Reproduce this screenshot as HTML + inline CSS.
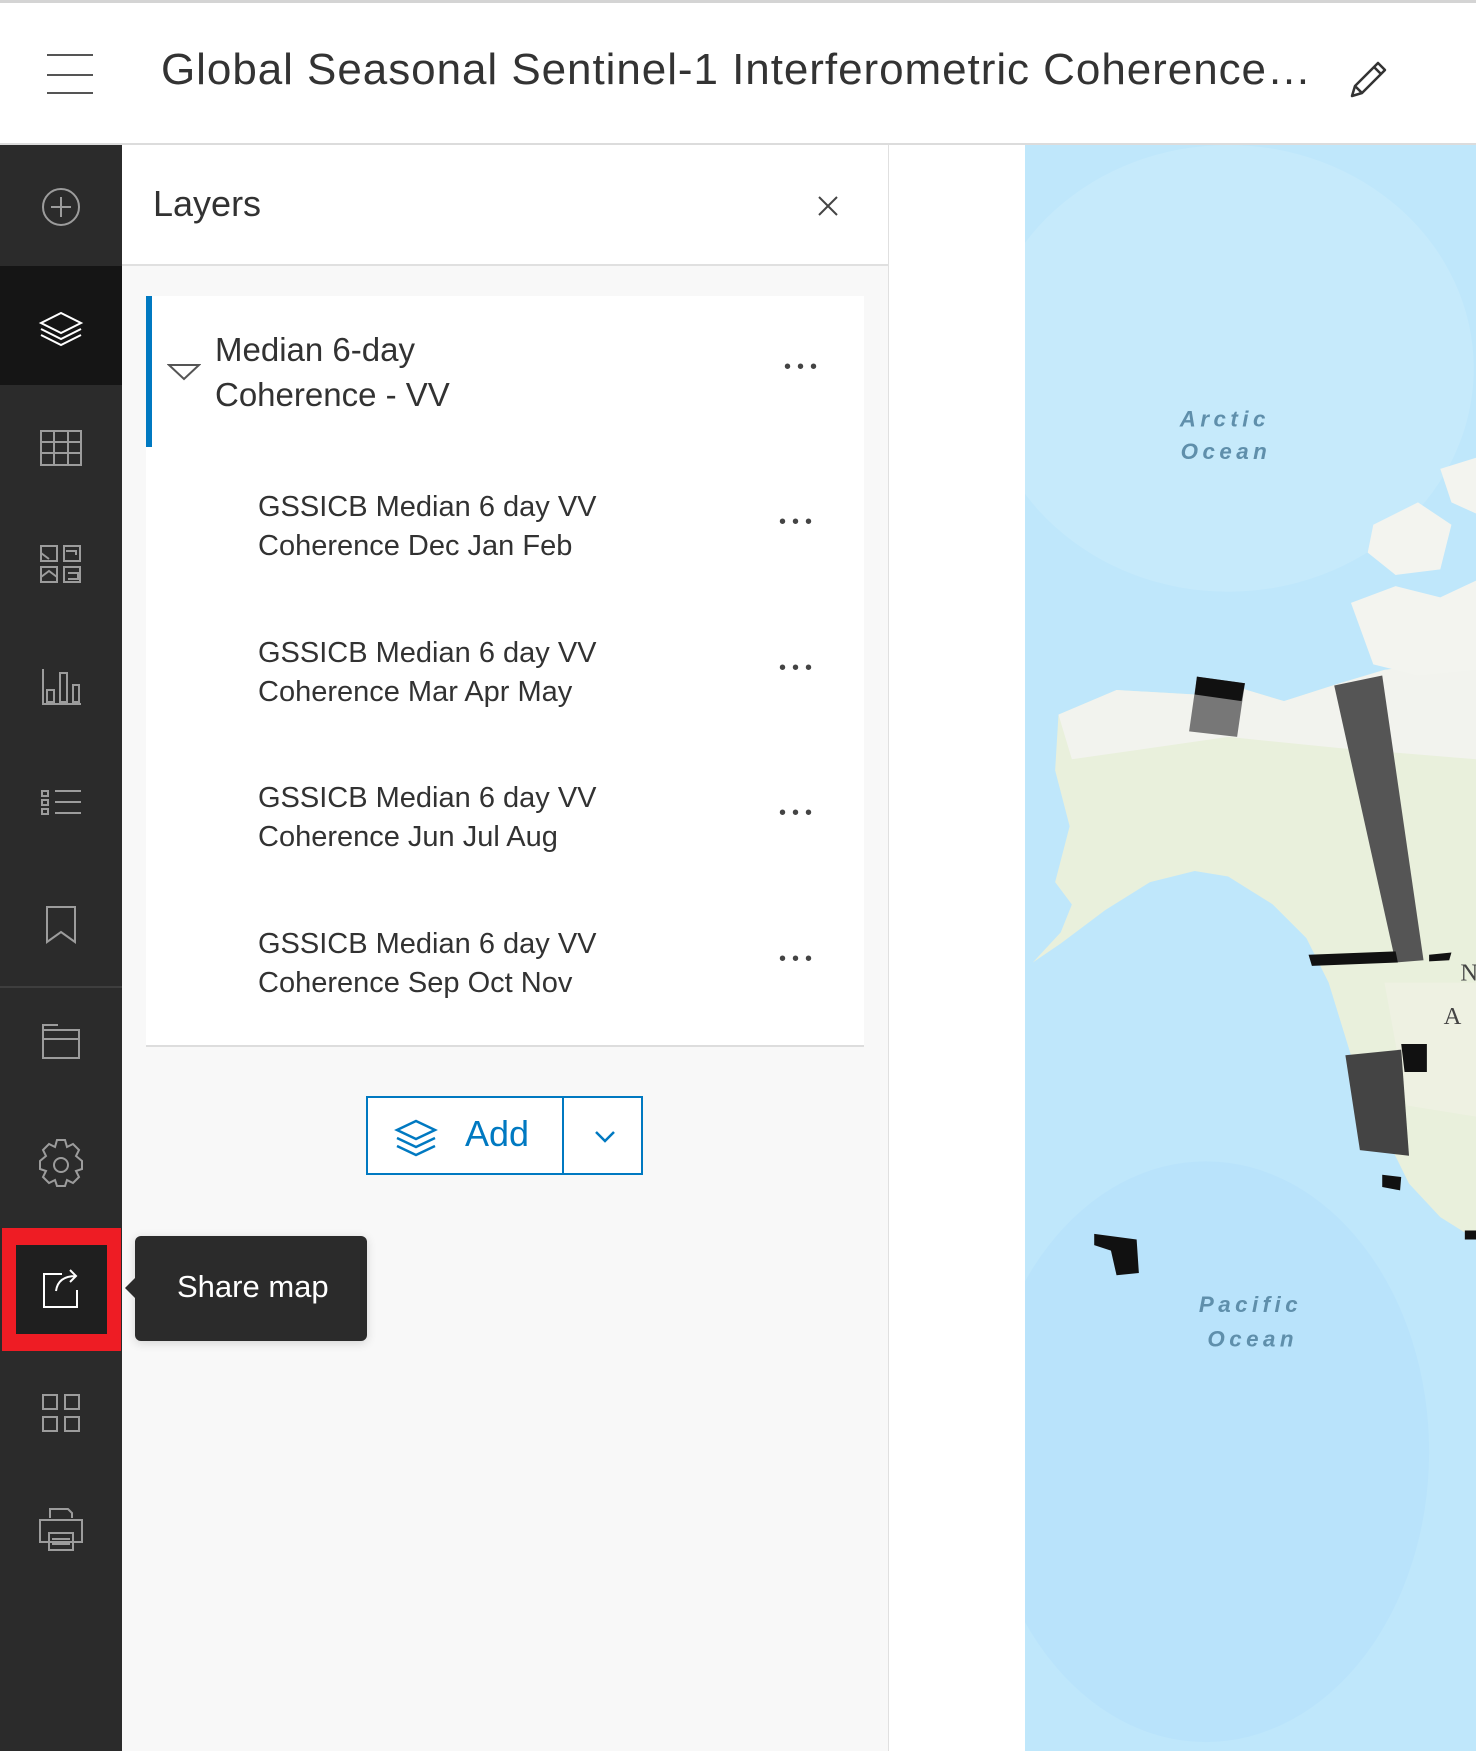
<!DOCTYPE html>
<html><head><meta charset="utf-8"><style>
*{margin:0;padding:0;box-sizing:border-box}
body{width:1476px;height:1751px;overflow:hidden;background:#fff;font-family:"Liberation Sans",sans-serif;position:relative}
.abs{position:absolute}
.top{left:0;top:0;width:1476px;height:145px;background:#fff;border-top:3px solid #d4d4d4;border-bottom:2px solid #dcdcdc}
.side{left:0;top:145px;width:122px;height:1606px;background:#2b2b2b}
.panel{left:122px;top:145px;width:767px;height:1606px;background:#f8f8f8;border-right:1px solid #e0e0e0}
.t{color:#323232;white-space:nowrap}
.dots{font-size:20px;color:#444;letter-spacing:6px}
</style></head><body>
<div class="abs top">
 <div class="abs" style="left:47px;top:51px;width:46px;height:2px;background:#555"></div>
 <div class="abs" style="left:47px;top:71px;width:46px;height:2px;background:#555"></div>
 <div class="abs" style="left:47px;top:89px;width:46px;height:2px;background:#555"></div>
 <div class="abs t" style="left:161px;top:42px;font-size:44px;letter-spacing:0.95px;color:#333">Global Seasonal Sentinel-1 Interferometric Coherence…</div>
 <svg class="abs" style="left:1348px;top:55px" width="42" height="42" viewBox="0 0 42 42"><path d="M4 38 L7 28 L30 5 L37 12 L14 35 Z M26 9 L33 16 M7 28 L14 35" fill="none" stroke="#333" stroke-width="2.5" stroke-linejoin="round"/></svg>
</div>
<div class="abs side">
 <div class="abs" style="left:0;top:121px;width:122px;height:119px;background:#151515"></div>
 <div class="abs" style="left:0;top:841px;width:122px;height:2px;background:#3e3e3e"></div>
 <div class="abs" style="left:2px;top:1083px;width:119px;height:123px;background:#ee1c24"></div>
 <div class="abs" style="left:16px;top:1100px;width:91px;height:89px;background:#1f1f1f"></div>
 <svg class="abs" style="left:0;top:0" width="122" height="1606" fill="none" stroke="#9c9c9c" stroke-width="2">
  <circle cx="61" cy="62" r="18"/><path d="M61 52V72M51 62H71"/>
  <g stroke="#fff"><path d="M41 178 L61 168 L81 178 L61 188 Z M41 184 L61 194 L81 184 M41 190 L61 200 L81 190"/></g>
  <path d="M41 286H81V320H41Z M41 297H81M41 308H81M54 286V320M68 286V320"/>
  <path d="M41 401H57V416H41Z M64 401H80V416H64Z M41 422H57V437H41Z M64 422H80V437H64Z M41 408l8 6 M66 406H76V410 M41 432 l8-6 8 6 M68 428H78V434H68"/>
  <path d="M43 524V559H81 M47 545H54V557H47Z M60 528H67V557H60Z M73 540H79V557H73Z"/>
  <path d="M42 646H48V651H42Z M42 655H48V660H42Z M42 664H48V669H42Z M55 646H81M55 657H81M55 668H81"/>
  <path d="M47 762H75V797L61 787L47 797Z"/>
  <path d="M43 885H79V913H43Z M43 894H79 M43 885V880H58"/>
  <path d="M55 1002 L57 995 H65 L67 1002 L73 999 L79 1005 L76 1011 L82 1016 V1024 L76 1026 L79 1032 L73 1038 L67 1035 L65 1041 H57 L55 1035 L49 1038 L43 1032 L46 1026 L40 1024 V1016 L46 1011 L43 1005 L49 999 Z"/><circle cx="61" cy="1020" r="7"/>
  <g stroke="#fff"><path d="M62 1129H44V1162H77V1145 M56 1146 Q58 1131 76 1131 M70 1125L76 1131L70 1137"/></g>
  <path d="M43 1250H57V1264H43Z M65 1250H79V1264H65Z M43 1272H57V1286H43Z M65 1272H79V1286H65Z"/>
  <path d="M50 1373V1364H68L72 1368V1373 M40 1375H82V1397H40Z M49 1388H73V1405H49Z M52 1394H70M52 1399H70"/>
 </svg>
</div>
<div class="abs panel">
 <div class="abs" style="left:0;top:0;width:766px;height:121px;background:#fff;border-bottom:2px solid #e0e0e0"></div>
 <div class="abs t" style="left:31px;top:38px;font-size:36px">Layers</div>
 <svg class="abs" style="left:695px;top:50px" width="22" height="22"><path d="M2 2L20 20M20 2L2 20" stroke="#444" stroke-width="2"/></svg>
 <div class="abs" style="left:24px;top:151px;width:718px;height:751px;background:#fff;border-bottom:2px solid #ddd"></div>
 <div class="abs" style="left:24px;top:151px;width:6px;height:151px;background:#0079c1"></div>
 <svg class="abs" style="left:45px;top:218px" width="34" height="18"><path d="M2 2H32L17 16Z" fill="none" stroke="#555" stroke-width="2"/></svg>
 <div class="abs t" style="left:93px;top:182px;font-size:33px;line-height:45px">Median 6-day<br>Coherence - VV</div>
 <div class="abs dots" style="left:662px;top:211px">•••</div>
 <div class="abs t" style="left:136px;top:343px;font-size:29px;line-height:39px">GSSICB Median 6 day VV<br>Coherence Dec Jan Feb</div>
 <div class="abs dots" style="left:657px;top:366px">•••</div>
 <div class="abs t" style="left:136px;top:489px;font-size:29px;line-height:39px">GSSICB Median 6 day VV<br>Coherence Mar Apr May</div>
 <div class="abs dots" style="left:657px;top:512px">•••</div>
 <div class="abs t" style="left:136px;top:634px;font-size:29px;line-height:39px">GSSICB Median 6 day VV<br>Coherence Jun Jul Aug</div>
 <div class="abs dots" style="left:657px;top:657px">•••</div>
 <div class="abs t" style="left:136px;top:780px;font-size:29px;line-height:39px">GSSICB Median 6 day VV<br>Coherence Sep Oct Nov</div>
 <div class="abs dots" style="left:657px;top:803px">•••</div>
 <div class="abs" style="left:244px;top:951px;width:277px;height:79px;background:#fff;border:2px solid #0079c1"></div>
 <div class="abs" style="left:440px;top:951px;width:2px;height:79px;background:#0079c1"></div>
 <svg class="abs" style="left:272px;top:973px" width="44" height="40" fill="none" stroke="#0079c1" stroke-width="2.5"><path d="M3 12L22 3L41 12L22 21Z M3 20L22 29L41 20 M3 28L22 37L41 28"/></svg>
 <div class="abs" style="left:343px;top:968px;font-size:36px;color:#0079c1">Add</div>
 <svg class="abs" style="left:472px;top:985px" width="22" height="14"><path d="M2 2L11 11L20 2" fill="none" stroke="#0079c1" stroke-width="2.5"/></svg>
 <div class="abs" style="left:13px;top:1091px;width:232px;height:105px;background:#2b2b2b;border-radius:6px;box-shadow:0 2px 10px rgba(0,0,0,.15)"></div>
 <div class="abs" style="left:3px;top:1132px;width:0;height:0;border-top:11px solid transparent;border-bottom:11px solid transparent;border-right:11px solid #2b2b2b"></div>
 <div class="abs" style="left:55px;top:1124px;font-size:31px;color:#fff">Share map</div>
</div>
<svg class="abs" style="left:1025px;top:145px" width="451" height="1606" viewBox="918 130 404 1438" preserveAspectRatio="none">
 <rect x="918" y="130" width="404" height="1438" fill="#bfe7fb"/>
 <ellipse cx="1100" cy="330" rx="220" ry="200" fill="#c6eafb"/>
 <ellipse cx="1080" cy="1300" rx="200" ry="260" fill="#b9e3fb"/>
 <path d="M948 640 L1000 618 L1070 622 L1110 616 L1150 628 L1200 612 L1240 600 L1322 590 L1322 1110 L1290 1090 L1262 1060 L1235 1005 L1210 945 L1190 880 L1170 840 L1140 810 L1100 785 L1070 780 L1030 790 L990 815 L950 845 L925 862 L950 835 L960 810 L945 790 L958 740 L945 690 Z" fill="#e9f0dc"/>
 <path d="M948 640 L1000 618 L1070 622 L1110 616 L1150 628 L1200 612 L1240 600 L1322 590 L1322 680 L1200 670 L1100 660 L960 680 Z" fill="#f2f3ee"/>
 <path d="M1210 540 L1250 525 L1290 535 L1322 520 L1322 600 L1270 605 L1230 595 Z M1230 470 L1270 450 L1300 470 L1290 510 L1250 515 L1225 495 Z M1290 420 L1322 410 L1322 460 L1300 450 Z" fill="#f3f4ef"/>
 <path d="M1240 880 L1322 880 L1322 1000 L1260 990 Z" fill="#eef1e2"/>
 <path d="M1072 606 L1115 612 L1108 660 L1065 655 Z" fill="#777"/><path d="M1072 606 L1115 612 L1112 628 L1070 622Z" fill="#111"/>
 <path d="M1195 614 L1238 605 L1275 860 L1250 862 Z" fill="#555"/>
 <path d="M1172 855 L1250 852 L1252 862 L1175 865 Z M1280 855 L1300 853 L1298 860 L1280 861Z" fill="#111"/>
 <path d="M1205 945 L1255 940 L1262 1035 L1218 1030 Z" fill="#444"/>
 <path d="M1255 935 L1278 935 L1278 960 L1258 960 Z M1238 1052 L1255 1054 L1254 1066 L1238 1063 Z M980 1105 L1018 1110 L1020 1140 L1000 1142 L995 1120 L980 1115 Z M1312 1102 L1322 1102 L1322 1110 L1312 1110Z" fill="#111"/>
 <g font-family="Liberation Sans" font-style="italic" font-weight="bold" fill="#5f8fab" font-size="20" letter-spacing="4" text-anchor="middle">
  <text x="1097" y="382">Arctic</text><text x="1098" y="411">Ocean</text>
  <text x="1120" y="1175">Pacific</text><text x="1122" y="1206">Ocean</text>
 </g>
 <g font-family="Liberation Serif" fill="#444" font-size="22" letter-spacing="6"><text x="1308" y="878">N</text><text x="1293" y="917">A</text></g>
</svg>
</body></html>
